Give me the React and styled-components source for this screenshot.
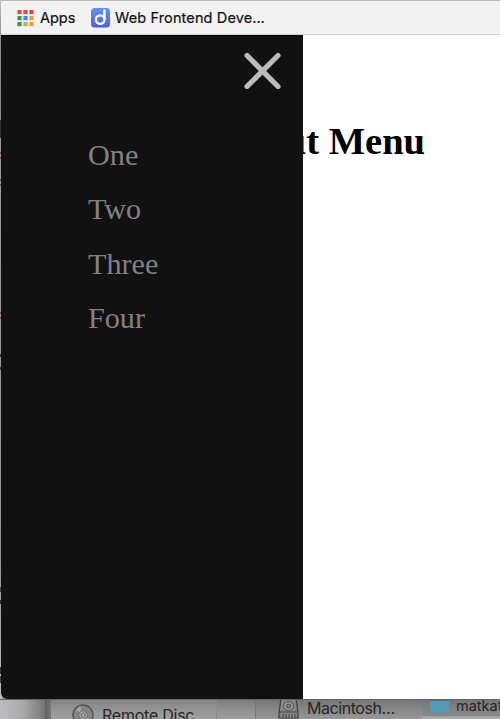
import React from "react";
import styled, { createGlobalStyle } from "styled-components";

const GlobalStyle = createGlobalStyle`
  *, *::before, *::after { box-sizing: border-box; }
  body { margin: 0; overflow: hidden; }
`;

const Desktop = styled.div`
  width: 500px;
  height: 719px;
  display: flex;
  flex-direction: column;
  position: relative;
  overflow: hidden;
  background: #929292;
`;

const EditorEdge = styled.div`
  position: absolute;
  left: 0;
  top: 0;
  width: 3px;
  height: 699px;
  background: linear-gradient(#c0c0c0, #909090 35px, #858585 104px, #9b9b9b 140px, #969696 560px, #bcbcbc);
`;

const EdgeMark = styled.i`
  position: absolute;
  left: 0;
  top: ${(p) => p.$top}px;
  width: 2px;
  height: ${(p) => p.$height}px;
  background: ${(p) => p.$color};
`;

const BrowserWindow = styled.main`
  position: relative;
  height: 699px;
  flex: none;
  margin-left: 1.4px;
  display: flex;
  flex-direction: column;
  background: #fff;
  border-bottom-left-radius: 6px;
  overflow: hidden;
`;

const BookmarkBar = styled.nav`
  height: 35px;
  flex: none;
  display: flex;
  align-items: center;
  padding: 1px 0 0 15.6px;
  background: #f2f2f2;
  border-top: 1px solid #b9b9b9;
  border-bottom: 1px solid #d0d0d0;
  color: #111;
  font: 15px/20px Inter, "Liberation Sans", sans-serif;
`;

const Bookmark = styled.span`
  display: flex;
  align-items: center;
  gap: ${(p) => p.$gap}px;
  width: ${(p) => p.$width}px;
  white-space: nowrap;
`;

const BookmarkLabel = styled.span`
  font-size: 14.5px;
  letter-spacing: ${(p) => p.$tracking || 0}px;
  -webkit-text-stroke: 0.2px #111;
`;

const Viewport = styled.div`
  flex: 1;
  display: flex;
  min-height: 0;
`;

const Drawer = styled.aside`
  width: 301.6px;
  flex: none;
  background: #111;
  padding: 17px 22px 0 86.6px;
  display: flex;
  flex-direction: column;
`;

const CloseButton = styled.button`
  align-self: flex-end;
  width: 37px;
  height: 37px;
  padding: 0;
  border: 0;
  background: none;
  display: flex;
`;

const MenuList = styled.ul`
  list-style: none;
  margin: 39px 0 0;
  padding: 0;
  color: #818181;
  font: 30.2px/54.3px "Liberation Serif", serif;
`;

const Page = styled.section`
  flex: 1;
  overflow: hidden;
`;

const Title = styled.h1`
  margin: 84px 0 0 -18.3px;
  font: bold 38.6px/44px "Liberation Serif", serif;
  color: #000;
  white-space: nowrap;
`;

const FinderStrip = styled.footer`
  height: 20px;
  display: flex;
  color: #262626;
  font: 16.5px/20px Inter, "Liberation Sans", sans-serif;
  overflow: hidden;
  border-top: 1px solid #666;
`;

const Backdrop = styled.div`
  width: 51px;
  flex: none;
  background: linear-gradient(90deg, #bcbcc0, #aaaaac 45%, #747474 88%, #5e5e5e 89%, #777);
`;

const FinderColumn = styled.div`
  width: ${(p) => p.$width}px;
  flex: none;
  display: flex;
  align-items: flex-start;
  gap: ${(p) => p.$gap || 0}px;
  padding: ${(p) => p.$padding || "0"};
  background: ${(p) => p.$background};
  border-right: ${(p) => (p.$divided ? `1px solid ${p.$divided}` : "0")};
  white-space: nowrap;
  overflow: hidden;
`;

const FileName = styled.span`
  flex: none;
  margin-top: ${(p) => p.$top}px;
  font-size: ${(p) => p.$size}px;
  letter-spacing: ${(p) => p.$tracking || 0}px;
`;

const Glyph = styled.svg`
  display: block;
  flex: none;
  margin-top: ${(p) => p.$top || 0}px;
`;

const edgeMarks = [
  [120, 18, "#303030"], [152, 2, "#704961"], [157, 2, "#704961"],
  [179, 2, "#704961"], [184, 2, "#704961"], [312, 2, "#704961"],
  [317, 2, "#704961"], [354, 3, "#353535"], [367, 3, "#353535"],
  [587, 5, "#454545"], [600, 4, "#333"], [667, 7, "#333"], [676, 7, "#444"],
];

const appColors = [
  "#df4844", "#df4844", "#df4844",
  "#37945d", "#408bd8", "#dda336",
  "#37945d", "#dda336", "#dda336",
];

export default function App() {
  return (
    <Desktop>
      <GlobalStyle />
      <EditorEdge>
        {edgeMarks.map(([top, height, color]) => (
          <EdgeMark key={top} $top={top} $height={height} $color={color} />
        ))}
      </EditorEdge>
      <BrowserWindow>
        <BookmarkBar>
          <Bookmark $gap={6} $width={74}>
            <Glyph width="17" height="17" viewBox="0 0 17 17">
              {appColors.map((color, i) => (
                <rect key={i} x={0.4 + (i % 3) * 6} y={(Math.floor(i / 3)) * 6} width="4.2" height="4.2" fill={color} />
              ))}
            </Glyph>
            <BookmarkLabel>Apps</BookmarkLabel>
          </Bookmark>
          <Bookmark $gap={5} $width={200}>
            <Glyph width="19" height="20" viewBox="0 0 19 20">
              <defs>
                <linearGradient id="bookmarkBlue" x2="0" y2="1">
                  <stop stopColor="#6393f7" />
                  <stop offset="1" stopColor="#4b5df0" />
                </linearGradient>
              </defs>
              <rect width="19" height="19.5" rx="3.5" fill="url(#bookmarkBlue)" />
              <circle cx="9.2" cy="11.6" r="4.3" fill="none" stroke="#fff" strokeWidth="2.3" />
              <path d="M13.4 1.5V12" stroke="#fff" strokeWidth="2.4" />
            </Glyph>
            <BookmarkLabel $tracking={0.13}>Web Frontend Deve…</BookmarkLabel>
          </Bookmark>
        </BookmarkBar>
        <Viewport>
          <Drawer>
            <CloseButton aria-label="Close menu">
              <Glyph width="37" height="37" viewBox="0 0 37 37">
                <path d="M3 3.5L34 34.5M34 3.5L3 34.5" stroke="#bcbcbc" strokeWidth="5.2" strokeLinecap="round" />
              </Glyph>
            </CloseButton>
            <MenuList>
              <li>One</li>
              <li>Two</li>
              <li>Three</li>
              <li>Four</li>
            </MenuList>
          </Drawer>
          <Page><Title>ut Menu</Title></Page>
        </Viewport>
      </BrowserWindow>
      <FinderStrip>
        <Backdrop />
        <FinderColumn $width={166} $gap={8} $padding="0 0 0 21px" $divided="#898989" $background="linear-gradient(#858585, #a1a1a1)">
          <Glyph $top={4} width="22" height="22" viewBox="0 0 22 22">
            <circle cx="11" cy="11" r="10" fill="#858585" stroke="#555" strokeWidth="1.5" />
            <path d="M4 6L11 11L8 2M11 11L18 16L14 19Z" fill="#a5a5a5" />
            <circle cx="11" cy="11" r="4.5" fill="#999" stroke="#737373" />
            <circle cx="11" cy="11" r="1.8" fill="#aaa" stroke="#777" />
          </Glyph>
          <FileName $top={5} $size={16} $tracking={-0.24}>Remote Disc</FileName>
        </FinderColumn>
        <FinderColumn $width={39} $divided="#777" $background="linear-gradient(#7d7d7d, #a0a0a0)" />
        <FinderColumn $width={166} $gap={8} $padding="0 0 0 22px" $background="linear-gradient(#777, #979797)">
          <Glyph $top={0} width="21" height="20" viewBox="0 0 21 20">
            <path d="M3 -2H18L20 13V18H1V13Z" fill="#858585" stroke="#3e3e3e" strokeWidth="1.2" />
            <ellipse cx="10.5" cy="6" rx="5" ry="4.5" fill="#999" stroke="#555" />
            <circle cx="10.5" cy="6" r="2" fill="#858585" stroke="#444" />
            <path d="M1 12H20M5 14V17M8 14V17M11 14V17M14 14V17M17 14V17" stroke="#444" />
          </Glyph>
          <FileName $top={-2} $size={16} $tracking={-0.45}>Macintosh…</FileName>
        </FinderColumn>
        <FinderColumn $width={78} $gap={7} $padding="0 0 0 8px" $background="linear-gradient(#777, #898989 16px, #b0b0b0 17px, #aaa)">
          <Glyph width="19" height="13" viewBox="0 0 19 13">
            <path d="M0 0H19V12Q19 13 18 13H1Q0 13 0 12Z" fill="#549bb6" />
            <path d="M0 0H19V1H0Z" fill="#43778a" />
          </Glyph>
          <FileName $top={-4} $size={14.5}>matkat</FileName>
        </FinderColumn>
      </FinderStrip>
    </Desktop>
  );
}
